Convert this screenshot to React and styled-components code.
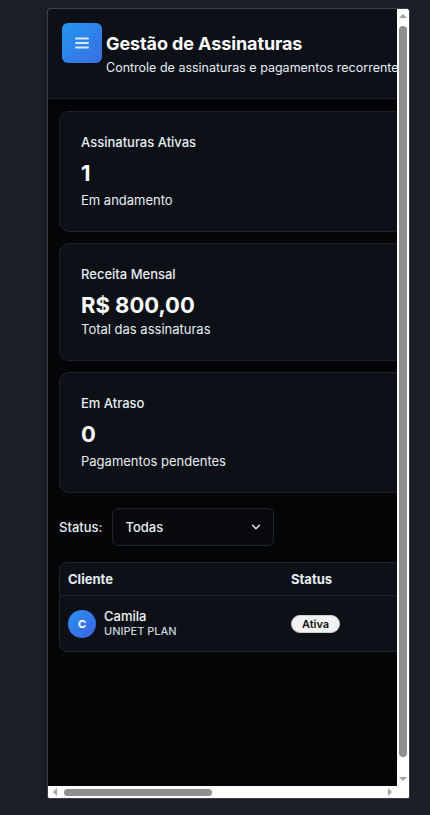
import React from "react";
import styled, { createGlobalStyle } from "styled-components";

const GlobalStyle = createGlobalStyle`
  html, body {
    margin: 0;
    background: #1b1e27;
  }
  body {
    font-family: Inter, "Noto Sans", sans-serif;
    color: #e6edf3;
  }
  * { box-sizing: border-box; }
`;

const Page = styled.div`
  padding: 8px 20px 16px 47px;
`;

// preview window: viewport + drawn scrollbars (headless hides the native ones)
const Frame = styled.div`
  width: 363px;
  height: 791px;
  border: 1px solid #3b404b;
  border-radius: 4px 4px 3px 3px;
  overflow: hidden;
  display: grid;
  grid-template-columns: 1fr 12px;
  grid-template-rows: 1fr 12px;
  background: #fff;
`;

const Viewport = styled.div`
  overflow: hidden;
  background: #040506;
`;

const ScrollBar = styled.div`
  background: #fff;
  display: flex;
  flex-direction: ${(p) => (p.$horizontal ? "row" : "column")};
  align-items: center;
`;

const ArrowBox = styled.div`
  flex: 0 0 14px;
  width: ${(p) => (p.$horizontal ? "14px" : "12px")};
  height: ${(p) => (p.$horizontal ? "12px" : "14px")};
  display: flex;
  align-items: center;
  justify-content: center;
`;

const Arrow = styled.span`
  width: 0;
  height: 0;
  border: 4px solid transparent;
  ${(p) => p.$dir === "up" && "border-top: 0; border-bottom-color: #a3a3a3;"}
  ${(p) => p.$dir === "down" && "border-bottom: 0; border-top-color: #a3a3a3;"}
  ${(p) => p.$dir === "left" && "border-left: 0; border-right-color: #a3a3a3;"}
  ${(p) => p.$dir === "right" && "border-right: 0; border-left-color: #a3a3a3;"}
`;

const Thumb = styled.div`
  background: #8f8f8f;
  border-radius: 4px;
  ${(p) =>
    p.$horizontal
      ? `height: 7px; width: ${p.$size}px; margin-left: 2px;`
      : `width: 8px; height: ${p.$size}px; margin-top: 3px; align-self: center;`}
`;

const Spacer = styled.div`
  flex: 1;
`;

const Corner = styled.div`
  background: #fff;
`;

const Screen = styled.div`
  width: 767px;
  min-height: 798px;
  background: #040506;
`;

const Header = styled.header`
  background: #0d1117;
  border-bottom: 1px solid #1c2129;
  padding: 14px 14px 22px;
`;

const TitleRow = styled.div`
  display: flex;
  align-items: center;
  gap: 4px;
`;

const LogoBox = styled.div`
  width: 40px;
  height: 40px;
  border-radius: 6px;
  background: linear-gradient(135deg, #2197f3 0%, #3a6ee0 100%);
  display: flex;
  align-items: center;
  justify-content: center;
`;

const Title = styled.h1`
  margin: 0;
  font-size: 18px;
  font-weight: 700;
  color: #fff;
  letter-spacing: -0.1px;
`;

const Subtitle = styled.p`
  margin: -3px 0 0 44px;
  font-size: 12.5px;
  line-height: 16px;
  color: #e6edf3;
  white-space: nowrap;
`;

const Main = styled.main`
  padding: 12px 11px;
  display: flex;
  flex-direction: column;
  gap: 16px;
`;

const Stats = styled.div`
  display: flex;
  flex-direction: column;
  gap: 11px;
  margin-bottom: -1px;
`;

const Card = styled.div`
  background: #0d1117;
  border: 1px solid #1e232b;
  border-radius: 10px;
  padding: 21px 21px 22px;
`;

const CardLabel = styled.div`
  font-size: 13px;
  font-weight: 500;
  line-height: 18px;
  color: #e6edf3;
`;

const CardValue = styled.div`
  margin-top: 7px;
  font-size: 22px;
  font-weight: 700;
  line-height: 30px;
  color: #fff;
`;

const CardNote = styled.div`
  margin-top: ${(p) => (p.$tight ? "0" : "3px")};
  font-size: 13px;
  line-height: 18px;
  color: #e6edf3;
`;

const FilterRow = styled.div`
  display: flex;
  align-items: center;
  gap: 10px;
`;

const FilterLabel = styled.span`
  font-size: 13px;
  font-weight: 500;
  color: #e6edf3;
`;

const Select = styled.div`
  width: 162px;
  height: 38px;
  border: 1px solid #21262d;
  border-radius: 6px;
  background: #07090c;
  padding: 0 10px 0 12px;
  display: flex;
  align-items: center;
  justify-content: space-between;
  font-size: 13px;
  font-weight: 500;
  color: #e6edf3;
`;

const Table = styled.div`
  border: 1px solid #21262d;
  border-radius: 8px;
  background: #0d1117;
  overflow: hidden;
`;

const Row = styled.div`
  display: grid;
  grid-template-columns: 223px 160px 1fr;
  align-items: center;
  height: ${(p) => (p.$head ? "33px" : "55px")};
  border-bottom: ${(p) => (p.$head ? "1px solid #1e232b" : "none")};
`;

const HeadCell = styled.div`
  padding: 0 8px;
  font-size: 13px;
  font-weight: 700;
  color: #e6edf3;
`;

const Cell = styled.div`
  padding: 0 8px;
  display: flex;
  align-items: center;
  gap: 8px;
  font-size: 13px;
`;

const Avatar = styled.div`
  width: 28px;
  height: 28px;
  border-radius: 50%;
  background: linear-gradient(135deg, #2a93f1 0%, #3d62df 100%);
  color: #fff;
  font-size: 11px;
  font-weight: 700;
  display: flex;
  align-items: center;
  justify-content: center;
`;

const ClientName = styled.div`
  font-size: 13px;
  font-weight: 500;
  line-height: 16px;
  color: #f0f3f6;
`;

const ClientPlan = styled.div`
  font-size: 11px;
  font-weight: 500;
  line-height: 15px;
  color: #c9d1d9;
`;

const Badge = styled.span`
  display: inline-flex;
  align-items: center;
  height: 18px;
  padding: 0 10px;
  border-radius: 999px;
  border: 1px solid #d0d0d0;
  background: #f2f2f2;
  color: #111;
  font-size: 11px;
  font-weight: 600;
`;

const MenuIcon = () => (
  <svg width="18" height="18" viewBox="0 0 18 18" fill="none">
    <path d="M3 4.5h12M3 9h12M3 13.5h12" stroke="#d8e8ff" strokeWidth="2" strokeLinecap="round" />
  </svg>
);

const Chevron = () => (
  <svg width="14" height="14" viewBox="0 0 24 24" fill="none" stroke="#e6edf3" strokeWidth="2.4" strokeLinecap="round" strokeLinejoin="round">
    <path d="m6 9 6 6 6-6" />
  </svg>
);

const stats = [
  { label: "Assinaturas Ativas", value: "1", note: "Em andamento" },
  { label: "Receita Mensal", value: "R$ 800,00", note: "Total das assinaturas", tight: true },
  { label: "Em Atraso", value: "0", note: "Pagamentos pendentes" },
];

export default function App() {
  return (
    <>
      <GlobalStyle />
      <Page>
        <Frame>
          <Viewport>
            <Screen>
              <Header>
                <TitleRow>
                  <LogoBox>
                    <MenuIcon />
                  </LogoBox>
                  <Title>Gestão de Assinaturas</Title>
                </TitleRow>
                <Subtitle>Controle de assinaturas e pagamentos recorrentes</Subtitle>
              </Header>
              <Main>
                <Stats>
                  {stats.map((s) => (
                    <Card key={s.label}>
                      <CardLabel>{s.label}</CardLabel>
                      <CardValue>{s.value}</CardValue>
                      <CardNote $tight={s.tight}>{s.note}</CardNote>
                    </Card>
                  ))}
                </Stats>
                <FilterRow>
                  <FilterLabel>Status:</FilterLabel>
                  <Select>
                    Todas
                    <Chevron />
                  </Select>
                </FilterRow>
                <Table>
                  <Row $head>
                    <HeadCell>Cliente</HeadCell>
                    <HeadCell>Status</HeadCell>
                    <HeadCell />
                  </Row>
                  <Row>
                    <Cell>
                      <Avatar>C</Avatar>
                      <div>
                        <ClientName>Camila</ClientName>
                        <ClientPlan>UNIPET PLAN</ClientPlan>
                      </div>
                    </Cell>
                    <Cell>
                      <Badge>Ativa</Badge>
                    </Cell>
                    <Cell />
                  </Row>
                </Table>
              </Main>
            </Screen>
          </Viewport>
          <ScrollBar>
            <ArrowBox>
              <Arrow $dir="up" />
            </ArrowBox>
            <Thumb $size={731} />
            <Spacer />
            <ArrowBox>
              <Arrow $dir="down" />
            </ArrowBox>
          </ScrollBar>
          <ScrollBar $horizontal>
            <ArrowBox $horizontal>
              <Arrow $dir="left" />
            </ArrowBox>
            <Thumb $horizontal $size={148} />
            <Spacer />
            <ArrowBox $horizontal>
              <Arrow $dir="right" />
            </ArrowBox>
          </ScrollBar>
          <Corner />
        </Frame>
      </Page>
    </>
  );
}
